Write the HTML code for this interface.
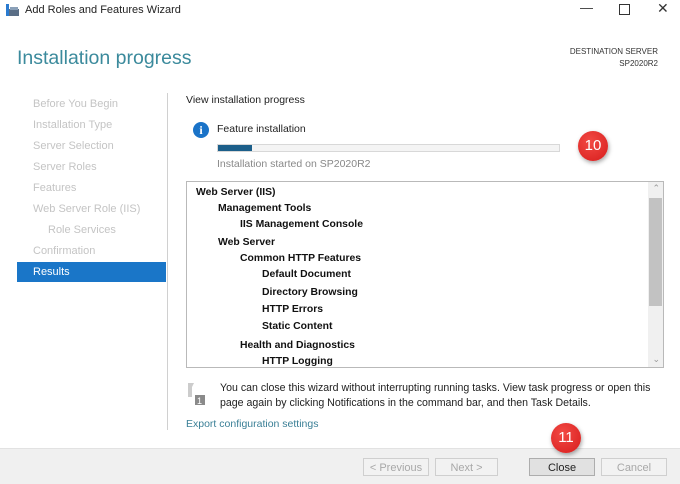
<!DOCTYPE html>
<html><head><style>
body{margin:0;width:680px;height:483px;background:#fff;font-family:"Liberation Sans",sans-serif;position:relative;overflow:hidden;font-size:11px;color:#1e1e1e}
.a{position:absolute;white-space:nowrap}
.nav{color:#c4c4c4;font-size:11px;left:33px}
.t{position:absolute;font-size:10.4px;font-weight:bold;color:#111;white-space:nowrap}
.btn{position:absolute;top:458px;height:18px;border:1px solid #cfcfcf;background:#f2f2f2;color:#a8a8a8;text-align:center;line-height:18px;font-size:11px;box-sizing:border-box}
.badge{position:absolute;width:30px;height:30px;border-radius:50%;background:radial-gradient(circle at 40% 35%,#f24a44,#d71c1c);color:#fff;font-size:15px;text-align:center;line-height:30px;box-shadow:1px 2px 4px rgba(0,0,0,.35)}
</style></head><body>
<svg class="a" style="left:6px;top:4px" width="14" height="13"><rect x="0" y="0" width="3" height="12" fill="#2a7bd0"/><rect x="3" y="5" width="10" height="7" fill="#5a6e86"/><rect x="4" y="3" width="8" height="3" fill="#8aa0b8"/></svg>
<div class="a" style="left:25px;top:4px;font-size:11px;color:#222">Add Roles and Features Wizard</div>
<div class="a" style="left:580px;top:0;font-size:13px;color:#333">—</div>
<div class="a" style="left:619px;top:4px;width:9px;height:9px;border:1px solid #333"></div>
<div class="a" style="left:657px;top:0;font-size:14px;color:#333">✕</div>
<div class="a" style="left:17px;top:47px;font-size:19.5px;color:#3b8a9c">Installation progress</div>
<div class="a" style="right:22px;top:46px;font-size:8px;color:#333;text-align:right;line-height:12px">DESTINATION SERVER<br>SP2020R2</div>
<div class="a nav" style="top:98px">Before You Begin</div>
<div class="a nav" style="top:119px">Installation Type</div>
<div class="a nav" style="top:140px">Server Selection</div>
<div class="a nav" style="top:161px">Server Roles</div>
<div class="a nav" style="top:182px">Features</div>
<div class="a nav" style="top:203px">Web Server Role (IIS)</div>
<div class="a nav" style="top:224px;left:48px">Role Services</div>
<div class="a nav" style="top:245px">Confirmation</div>
<div class="a" style="left:17px;top:262px;width:149px;height:20px;background:#1a76c8"></div>
<div class="a" style="left:33px;top:266px;color:#fff">Results</div>
<div class="a" style="left:167px;top:93px;width:1px;height:337px;background:#d0d0d0"></div>
<div class="a" style="left:186px;top:94px;font-size:10.5px">View installation progress</div>
<div class="a" style="left:193px;top:122px;width:16px;height:16px;border-radius:50%;background:#1a73c8;color:#fff;font-weight:bold;text-align:center;line-height:16px;font-family:'Liberation Serif',serif;font-size:12px">i</div>
<div class="a" style="left:217px;top:123px;font-size:10.5px">Feature installation</div>
<div class="a" style="left:217px;top:144px;width:341px;height:6px;border:1px solid #d8d8d8;background:#f4f4f4"></div>
<div class="a" style="left:218px;top:145px;width:34px;height:6px;background:#1c5f8a"></div>
<div class="a" style="left:217px;top:158px;color:#888;font-size:10.5px">Installation started on SP2020R2</div>
<div class="badge" style="left:578px;top:131px">10</div>
<div class="a" style="left:186px;top:181px;width:478px;height:187px;border:1px solid #b9b9b9;box-sizing:border-box;overflow:hidden">
<div class="a" style="right:0;top:0;width:15px;height:185px;background:#f0f0f0"></div>
<div class="a" style="right:1px;top:16px;width:13px;height:108px;background:#c2c2c2"></div>
<div class="a" style="right:3px;top:1px;font-size:9px;color:#999">⌃</div>
<div class="a" style="right:3px;top:172px;font-size:9px;color:#999">⌄</div>
<div class="t" style="left:9px;top:5px">Web Server (IIS)</div>
<div class="t" style="left:31px;top:21px">Management Tools</div>
<div class="t" style="left:53px;top:37px">IIS Management Console</div>
<div class="t" style="left:31px;top:55px">Web Server</div>
<div class="t" style="left:53px;top:71px">Common HTTP Features</div>
<div class="t" style="left:75px;top:87px">Default Document</div>
<div class="t" style="left:75px;top:105px">Directory Browsing</div>
<div class="t" style="left:75px;top:122px">HTTP Errors</div>
<div class="t" style="left:75px;top:139px">Static Content</div>
<div class="t" style="left:53px;top:158px">Health and Diagnostics</div>
<div class="t" style="left:75px;top:174px">HTTP Logging</div>
</div>
<svg class="a" style="left:187px;top:382px" width="22" height="24"><path d="M1 1h6l-2 4v10H1z" fill="#ccc"/><rect x="8" y="13" width="10" height="10" fill="#8a8a8a"/><text x="10" y="22" font-size="9" fill="#fff" font-family="Liberation Sans">1</text></svg>
<div class="a" style="left:220px;top:381px;line-height:15px;font-size:10.6px">You can close this wizard without interrupting running tasks. View task progress or open this<br>page again by clicking Notifications in the command bar, and then Task Details.</div>
<div class="a" style="left:186px;top:418px;color:#3a7f96;font-size:10.5px">Export configuration settings</div>
<div class="a" style="left:0;top:448px;width:680px;height:35px;background:#f0f0f0;border-top:1px solid #e2e2e2"></div>
<div class="btn" style="left:363px;width:66px">&lt; Previous</div>
<div class="btn" style="left:435px;width:63px">Next &gt;</div>
<div class="btn" style="left:529px;width:66px;background:#e1e1e1;border-color:#adadad;color:#222">Close</div>
<div class="btn" style="left:601px;width:66px">Cancel</div>
<div class="badge" style="left:551px;top:423px">11</div>
</body></html>
